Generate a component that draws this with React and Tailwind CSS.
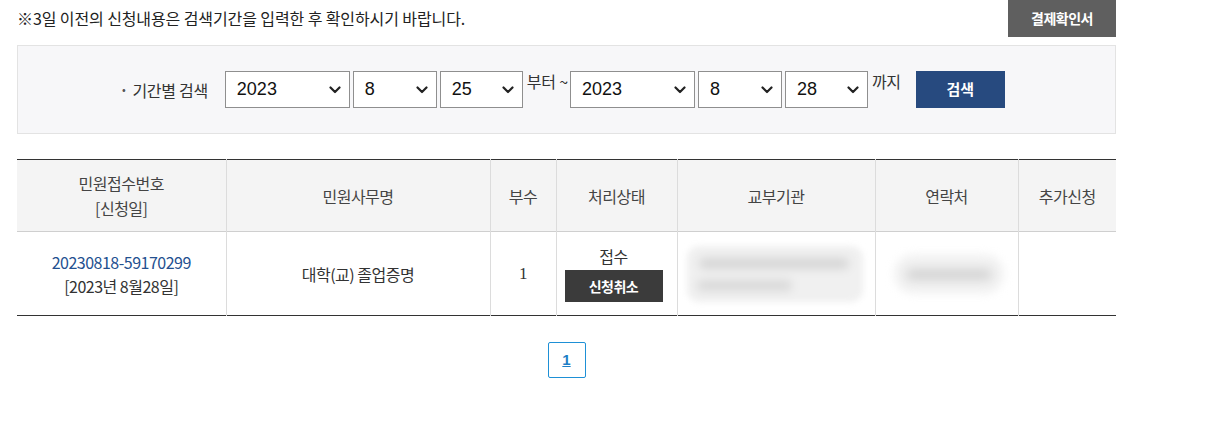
import React from "react";

const KR = { fontFamily: '"Noto Sans CJK KR", "Noto Sans", sans-serif' };

function Chevron() {
  return (
    <svg width="12" height="8" viewBox="0 0 12 8" className="shrink-0">
      <path d="M1.5 1.5 L6 6 L10.5 1.5" fill="none" stroke="#222" strokeWidth="2.2" strokeLinecap="round" strokeLinejoin="round" />
    </svg>
  );
}

function FakeSelect({ value, w }) {
  return (
    <div
      className={`h-[37px] border border-[#8f8f8f] bg-white flex items-center justify-between pl-[11px] pr-[8px] ${w}`}
      style={{ fontFamily: '"Liberation Sans", Arial, sans-serif' }}
    >
      <span className="text-[18px] text-[#111]">{value}</span>
      <Chevron />
    </div>
  );
}

export default function App() {
  return (
    <div className="w-[1205px] h-[426px] bg-white text-[#333]" style={KR}>
      <div className="ml-[17px] w-[1099px]">
        <div className="flex items-start justify-between h-[45px]">
          <p className="mt-[7px] text-[16px] tracking-[-0.1px] text-[#222] leading-[22px]">
            ※3일 이전의 신청내용은 검색기간을 입력한 후 확인하시기 바랍니다.
          </p>
          <button className="w-[108px] h-[37px] bg-[#5f5f5f] text-white text-[14px] font-bold tracking-[-0.5px]">
            결제확인서
          </button>
        </div>

        <div className="h-[89px] border border-[#e3e3e3] bg-[#f7f7f9] flex items-center">
          <div className="ml-[104px] flex items-center">
            <span className="text-[16px] text-[#333] tracking-[-0.3px] mr-[17px] flex items-center">
              <span className="text-[11px] mr-[7px] text-[#555]">•</span>기간별 검색
            </span>
            <div className="flex items-center gap-[3px]">
              <FakeSelect value="2023" w="w-[125px]" />
              <FakeSelect value="8" w="w-[84px]" />
              <FakeSelect value="25" w="w-[83px]" />
            </div>
            <span className="text-[16px] ml-[4px] mr-[2px] tracking-[-0.2px] self-start mt-[-2px]">부터 ~</span>
            <div className="flex items-center gap-[3px]">
              <FakeSelect value="2023" w="w-[125px]" />
              <FakeSelect value="8" w="w-[84px]" />
              <FakeSelect value="28" w="w-[83px]" />
            </div>
            <span className="text-[16px] ml-[4px] tracking-[-0.3px] self-start mt-[-2px]">까지</span>
            <button className="ml-[15px] w-[89px] h-[37px] bg-[#274a7f] text-white text-[15px] font-bold">
              검색
            </button>
          </div>
        </div>

        <table className="mt-[25px] w-[1099px] border-collapse table-fixed text-[16px] tracking-[-0.5px]">
          <colgroup>
            <col className="w-[209px]" />
            <col className="w-[264px]" />
            <col className="w-[66px]" />
            <col className="w-[121px]" />
            <col className="w-[198px]" />
            <col className="w-[143px]" />
            <col className="w-[98px]" />
          </colgroup>
          <thead>
            <tr className="h-[72px] bg-[#f4f4f4] border-t border-t-[#333] border-b border-b-[#cfcfcf]">
              <th className="font-normal text-[#444] leading-[25px] border-r border-[#dcdcdc]">
                민원접수번호<br />[신청일]
              </th>
              <th className="font-normal text-[#444] border-r border-[#dcdcdc]">민원사무명</th>
              <th className="font-normal text-[#444] border-r border-[#dcdcdc]">부수</th>
              <th className="font-normal text-[#444] border-r border-[#dcdcdc]">처리상태</th>
              <th className="font-normal text-[#444] border-r border-[#dcdcdc]">교부기관</th>
              <th className="font-normal text-[#444] border-r border-[#dcdcdc]">연락처</th>
              <th className="font-normal text-[#444]">추가신청</th>
            </tr>
          </thead>
          <tbody>
            <tr className="h-[84px] border-b border-b-[#333]">
              <td className="text-center leading-[24px] border-r border-[#dcdcdc]">
                <div className="text-[#23508f]">20230818-59170299</div>
                <div className="text-[#333]">[2023년 8월28일]</div>
              </td>
              <td className="text-center border-r border-[#dcdcdc]">대학(교) 졸업증명</td>
              <td className="text-center border-r border-[#dcdcdc]" style={{ fontFamily: '"Liberation Serif", serif' }}>
                <span className="text-[17px]">1</span>
              </td>
              <td className="text-center border-r border-[#dcdcdc]">
                <div className="flex flex-col items-center pr-[6px]">
                  <span className="leading-[22px] mb-[3px]">접수</span>
                  <button className="w-[98px] h-[32px] bg-[#3b3b3b] text-white text-[14px] font-bold">신청취소</button>
                </div>
              </td>
              <td className="border-r border-[#dcdcdc] px-[9px]">
                <div className="relative h-[56px] w-[176px] rounded-[12px] bg-[#f0f0f0] blur-[3px] overflow-hidden">
                  <div className="absolute left-[12px] top-[12px] h-[11px] w-[150px] rounded-full bg-[#d6d6d6] blur-[3px]" />
                  <div className="absolute left-[10px] top-[34px] h-[11px] w-[95px] rounded-full bg-[#d9d9d9] blur-[3px]" />
                </div>
              </td>
              <td className="border-r border-[#dcdcdc] px-[18px]">
                <div className="relative h-[40px] w-[110px] rounded-full bg-[#f2f2f2] blur-[4px]">
                  <div className="absolute left-[12px] top-[15px] h-[11px] w-[86px] rounded-full bg-[#d2d2d2] blur-[3px]" />
                </div>
              </td>
              <td></td>
            </tr>
          </tbody>
        </table>

        <div className="flex justify-center mt-[26px]">
          <div className="w-[38px] h-[36px] border border-[#1e90d6] rounded-[2px] flex items-center justify-center text-[#1e7fc6] font-bold underline text-[15px]" style={{ fontFamily: '"Liberation Sans", Arial, sans-serif' }}>
            1
          </div>
        </div>
      </div>
    </div>
  );
}
